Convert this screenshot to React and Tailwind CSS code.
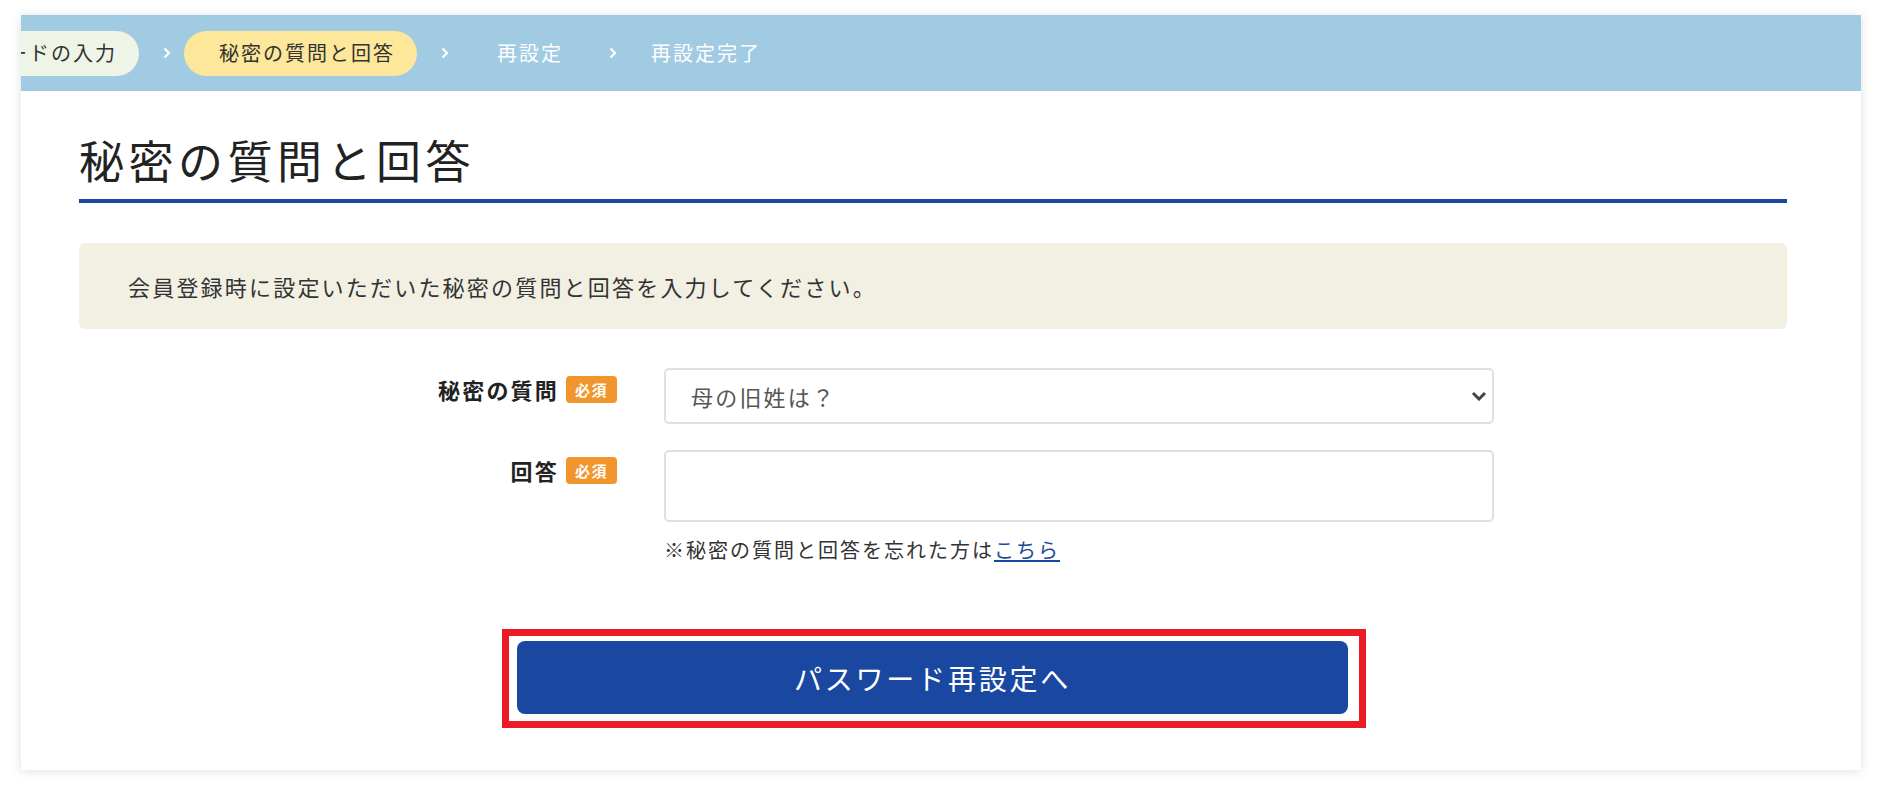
import { useState } from "react";

const steps = [
  { label: "パスワードの入力", style: "bg-[#eef5e7] text-[#333] rounded-full -ml-[115px]" },
  { label: "秘密の質問と回答", style: "bg-[#fde79a] text-[#333] rounded-full" },
  { label: "再設定", style: "text-white" },
  { label: "再設定完了", style: "text-white !pl-[21px]" },
];

const Chevron = () => (
  <svg width="10" height="14" viewBox="0 0 10 14" className="mx-[12px] ml-[23px] shrink-0">
    <path d="M2.5 2.5 L7 7 L2.5 11.5" fill="none" stroke="#fff" strokeWidth="2.2" />
  </svg>
);

const Required = () => (
  <span className="ml-[7px] inline-flex h-[27px] w-[51px] items-center justify-center rounded-[4px] bg-[#f0962d] text-[15px] font-bold leading-none tracking-[0.1em] text-white">
    必須
  </span>
);

const App = () => {
  const [question, setQuestion] = useState("mother");
  const [answer, setAnswer] = useState("");

  return (
    <div className="min-h-screen w-full bg-white pt-[15px] font-['Noto_Sans_CJK_JP','Noto_Sans',sans-serif]">
      <div className="ml-[21px] w-[1840px] bg-white shadow-[0_1px_10px_rgba(0,0,0,0.13)]">
        {/* breadcrumb */}
        <div className="flex h-[76px] items-center overflow-hidden bg-[#a0cbe2]">
          {steps.map((s, i) => (
            <div key={i} className="flex shrink-0 items-center">
              {i > 0 && <Chevron />}
              <span
                className={`flex h-[45px] items-center whitespace-nowrap pl-[35px] pr-[22px] text-[20px] leading-none tracking-[0.1em] ${s.style}`}
              >
                {s.label}
              </span>
            </div>
          ))}
        </div>

        <div className="pl-[58px] pr-[74px] pt-[40px] pb-[42px]">
          {/* title */}
          <h1 className="border-b-4 border-[#1a48a0] pb-[10px] text-[45px] font-normal leading-[58px] tracking-[0.1em] text-[#222]">
            秘密の質問と回答
          </h1>

          {/* notice */}
          <div className="mt-[40px] flex h-[86px] items-center rounded-[6px] bg-[#f2efe3] pl-[49px] text-[22px] tracking-[0.1em] text-[#333]">
            会員登録時に設定いただいた秘密の質問と回答を入力してください。
          </div>

          {/* form */}
          <div className="mt-[39px] flex flex-col gap-[26px]">
            <div className="flex gap-[47px]">
              <div className="flex w-[538px] items-center justify-end self-start pt-[6px]">
                <span className="text-[22px] font-bold leading-[30px] tracking-[0.1em] text-[#222]">秘密の質問</span>
                <Required />
              </div>
              <div className="relative w-[830px]">
                <select
                  value={question}
                  onChange={(e) => setQuestion(e.target.value)}
                  className="h-[56px] w-full appearance-none rounded-[5px] border-2 border-[#dde1e7] bg-white pl-[25px] text-[22px] tracking-[0.1em] text-[#555] outline-none"
                >
                  <option value="mother">母の旧姓は？</option>
                  <option value="pet">初めて飼ったペットの名前は？</option>
                  <option value="school">出身小学校の名前は？</option>
                </select>
                <svg
                  width="16"
                  height="10"
                  viewBox="0 0 16 10"
                  className="pointer-events-none absolute right-[7px] top-[23px]"
                >
                  <path d="M2 2 L8 8 L14 2" fill="none" stroke="#444" strokeWidth="3" />
                </svg>
              </div>
            </div>

            <div className="flex gap-[47px]">
              <div className="flex w-[538px] items-center justify-end self-start pt-[5px]">
                <span className="text-[22px] font-bold leading-[30px] tracking-[0.1em] text-[#222]">回答</span>
                <Required />
              </div>
              <div className="w-[830px]">
                <input
                  type="text"
                  value={answer}
                  onChange={(e) => setAnswer(e.target.value)}
                  className="h-[72px] w-full rounded-[5px] border-2 border-[#dde1e7] bg-white px-[25px] text-[22px] outline-none"
                />
                <p className="mt-[13px] text-[20px] leading-[30px] tracking-[0.1em] text-[#333]">
                  ※秘密の質問と回答を忘れた方は
                  <a href="#" className="text-[#1a48a0] underline underline-offset-2">
                    こちら
                  </a>
                </p>
              </div>
            </div>
          </div>

          {/* submit */}
          <div className="mt-[64px] flex">
            <div className="ml-[423px] border-[7px] border-[#ed1c24] pb-[7px] pl-[8px] pr-[11px] pt-[5px]">
              <button className="flex h-[73px] w-[831px] items-center justify-center rounded-[8px] bg-[#1a47a0] text-[28px] tracking-[0.1em] text-white">
                パスワード再設定へ
              </button>
            </div>
          </div>
        </div>
      </div>
    </div>
  );
};

export default App;
